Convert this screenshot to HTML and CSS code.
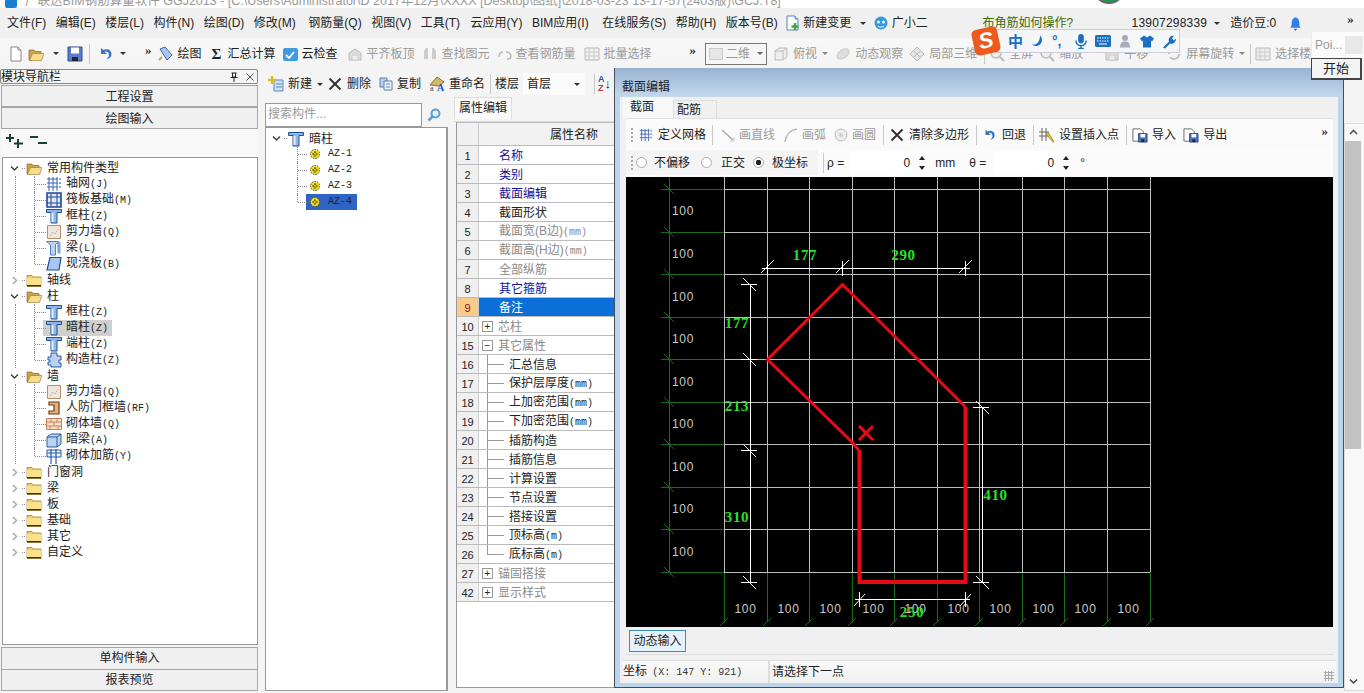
FILE: index.html
```html
<!DOCTYPE html>
<html lang="zh">
<head>
<meta charset="utf-8">
<title>截面编辑</title>
<link rel="stylesheet" href="styles.css">
</head>
<body>
<svg class="defs" aria-hidden="true">
  <symbol id="folder-open" viewBox="0 0 16 16"><path d="M1 4h5l1 1.500h6V8H5L3 14H1z" fill="#c9a24a" stroke="#8b6f2a" stroke-width=".7"/><path d="M4.500 7.500H16L13.500 14.500H1.500z" fill="#f6dc8c" stroke="#a5853a" stroke-width=".7"/></symbol>
  <symbol id="folder" viewBox="0 0 16 16"><path d="M1 3.500h5l1 1.500h8v9.500H1z" fill="#f4cf58" stroke="#9a7a22" stroke-width=".7"/><path d="M1 6h14v8.500H1z" fill="#fbe28a"/><path d="M1 13h14v1.500H1z" fill="#3a3010"/></symbol>
  <symbol id="pillar" viewBox="0 0 16 16"><path d="M.5 1.500h15v3h-4.500v10.500H5V4.500H.5z" fill="#8fb6ea" stroke="#24508f"/><path d="M6.500 5v9" stroke="#e4efff" stroke-width="2"/></symbol>
  <symbol id="grid" viewBox="0 0 16 16"><path d="M3 1v14M7 1v14M11 1v14M1 3h11M1 7h11M1 11h11" stroke="#3a66b8" fill="none"/><path d="M13 2h2v2h-2zM13 6h2v2h-2zM13 10h2v2h-2z" fill="#88a8d8"/></symbol>
  <symbol id="raft" viewBox="0 0 16 16"><path d="M1 1h14v14H1z" fill="#dbe6f7" stroke="#1f4a90" stroke-width="1.600"/><path d="M1 5h14M1 11h14M5 1v14M11 1v14" stroke="#1f4a90"/></symbol>
  <symbol id="wall" viewBox="0 0 16 16"><path d="M1.500 1.500h13v13h-13z" fill="#efe6dc" stroke="#b58a6a"/><path d="M4 12l3-4 2 2 3-5" stroke="#9aa8b8" stroke-dasharray="1 1" fill="none"/></symbol>
  <symbol id="beam" viewBox="0 0 16 16"><path d="M.5 1.500h12l-3 3v10.500h-5V5z" fill="#bcd4f2" stroke="#4d7fc0"/><path d="M11 1l3.500 1v12l-3-1z" fill="#7aa5dc"/></symbol>
  <symbol id="slab" viewBox="0 0 16 16"><path d="M4 1.500h11L13 14H1z" fill="#a9c6ee" stroke="#1f4f9c" stroke-width="1.200"/></symbol>
  <symbol id="gz" viewBox="0 0 16 16"><path d="M5 1h6v3h4v4h-2v3h2v4H5v-2H2v-3h2V8H2V5h3z" fill="#b9d2f2" stroke="#2a5aa5"/></symbol>
  <symbol id="door" viewBox="0 0 16 16"><path d="M3 2h10v12H3v-3h5V5H3z" fill="#e8b07a" stroke="#6b3d14" stroke-width="1.200"/></symbol>
  <symbol id="brick" viewBox="0 0 16 16"><path d="M.5 2.500h15v11H.5z" fill="#fbe0c8" stroke="#c4825a"/><path d="M.5 6h15M.5 10h15M5 2.500V6M11 2.500V6M8 6v4M4 10v3.500M12 10v3.500" stroke="#c4825a"/></symbol>
  <symbol id="aliang" viewBox="0 0 16 16"><path d="M1 5l4-3h10v10l-4 3H1z" fill="#b9d4f2" stroke="#2c5c96"/><path d="M1 5h10v10M11 5l4-3" stroke="#2c5c96" fill="none"/></symbol>
  <symbol id="jj" viewBox="0 0 16 16"><path d="M1 2h14v7H1z" fill="#e8f0fb" stroke="#2d5dac"/><path d="M5 1v15M10 1v15M1 5h14" stroke="#2d5dac" stroke-width="1.200"/></symbol>
  <symbol id="gear" viewBox="0 0 12 12"><circle cx="6" cy="6" r="4.500" fill="#f4e32a" stroke="#4a4a10" stroke-dasharray="1.500 1"/><path d="M3 6h6M6 3v6" stroke="#4a4a10"/><circle cx="6" cy="6" r="1.500" fill="#f4e32a" stroke="#4a4a10" stroke-width=".7"/></symbol>
  <symbol id="chev-d" viewBox="0 0 9 9"><path d="M1 2.500l3.500 3.500L8 2.500" fill="none" stroke="#444" stroke-width="1.500"/></symbol>
  <symbol id="chev-r" viewBox="0 0 9 9"><path d="M3 1l3.500 3.500L3 8" fill="none" stroke="#aaa" stroke-width="1.500"/></symbol>
  <symbol id="undo" viewBox="0 0 16 16"><path d="M4 2v6h6L7.500 5.800C9.500 5 12 6 12 9c0 1.500-1 3-3 4.500 3.500-.5 5.500-2.500 5.500-5.500C14.500 4 10 2 6.500 4z" fill="#3b72c4"/></symbol>
  <symbol id="x" viewBox="0 0 14 14"><path d="M1.500 1.500l11 11M12.500 1.500l-11 11" stroke="#333" stroke-width="2"/></symbol>
  <symbol id="disk" viewBox="0 0 16 16"><path d="M1 1h14v14H1z" fill="#5a7fc8" stroke="#2c4c8c"/><path d="M4 1.500h8v6H4z" fill="#fff"/><path d="M5 11h6v4H5z" fill="#223"/></symbol>
  <symbol id="doc" viewBox="0 0 16 16"><path d="M3 1h7l3 3v11H3z" fill="#fff" stroke="#888"/><path d="M10 1v3h3" fill="#ddd" stroke="#888"/></symbol>
  <symbol id="ghost" viewBox="0 0 16 16"><path d="M2 14V7l6-4 6 4v7z" fill="#ddd" stroke="#bbb"/><path d="M5 9h6v5H5z" fill="#eee" stroke="#ccc"/></symbol>
  <symbol id="sel" viewBox="0 0 16 16"><path d="M1 2h14v12H1z" fill="#eee" stroke="#bbb"/><path d="M1 6h14M1 10h14M5 2v12M10 2v12" stroke="#ccc"/></symbol>
  <symbol id="file-io" viewBox="0 0 17 17"><path d="M1 2h8l3 3v10H1z" fill="#fff" stroke="#666"/><path d="M7 7h9v9H7z" fill="#4d70bc" stroke="#2c4c8c"/><path d="M9 7.500h5v3.500H9z" fill="#fff"/><path d="M10 13h3v3h-3z" fill="#223"/></symbol>
</svg>

<header class="titlebar">
  <span class="app-icon"></span>
  <span class="title-text">广联达BIM钢筋算量软件 GGJ2013 - [C:\Users\Administrator\D 2017年12月\XXXX [Desktop\图纸]\2018-03-23 13-17-57(2403版)\GCJ.T8]</span>
</header>

<nav class="menubar">
  <span>文件(F)</span><span>编辑(E)</span><span>楼层(L)</span><span>构件(N)</span><span>绘图(D)</span><span>修改(M)</span><span class="m-g">钢筋量(Q)</span><span>视图(V)</span><span>工具(T)</span><span class="m-y">云应用(Y)</span><span>BIM应用(I)</span><span class="m-z">在线服务(S)</span><span>帮助(H)</span><span>版本号(B)</span>
  <span class="mi"><svg class="ic16" viewBox="0 0 16 16"><path d="M2 1h8l3 3v11H2z" fill="#fff" stroke="#4a86c8"/><path d="M10 1v3h3" fill="#cfe0f5" stroke="#4a86c8"/><path d="M10 8v7M6.500 11.500h7" stroke="#3fa83a" stroke-width="2.500"/></svg>新建变更<i class="caret caret-m"></i></span>
  <span class="mi mi2"><svg class="ic16" viewBox="0 0 16 16"><circle cx="8" cy="8" r="6.500" fill="#2e9be0"/><circle cx="5.500" cy="7" r="1.500" fill="#fff"/><circle cx="10.500" cy="7" r="1.500" fill="#fff"/><path d="M5 11c2 1.500 4 1.500 6 0" stroke="#fff" fill="none"/></svg>广小二</span>
  <span class="ad">布角筋如何操作?</span>
  <span class="phone">13907298339</span><i class="caret caret-p"></i>
  <span class="dou">造价豆:0</span>
  <svg class="bell" viewBox="0 0 12 14"><path d="M1 11c1.500-1 1.500-3 1.500-5S4 1.500 6 1.500 9.500 4 9.500 6s0 4 1.500 5z" fill="#2f7fe6"/><path d="M4.500 12h3L6 14z" fill="#1b5fb8"/></svg>
  <span class="more more-m">»</span>
</nav>

<div class="toolbar">
  <svg class="ic16 t1"><use href="#doc"/></svg>
  <svg class="ic16 t2"><use href="#folder-open"/></svg><i class="caret t3"></i>
  <svg class="ic16 t4"><use href="#disk"/></svg>
  <i class="sep t5"></i>
  <svg class="ic16 t6"><use href="#undo"/></svg><i class="caret t7"></i>
  <span class="more t8">»</span>
  <span class="ti t9"><svg class="ic16" viewBox="0 0 16 16"><path d="M2 3l5-2 7 8-5 5z" fill="#a8c8ee" stroke="#3a66a8"/><path d="M1 14l3-3" stroke="#c9a24a" stroke-width="2"/></svg>绘图</span>
  <span class="ti t10"><b class="sigma">Σ</b>汇总计算</span>
  <span class="ti t11"><svg class="ic16" viewBox="0 0 16 16"><rect x="1" y="2" width="15" height="13" rx="2" fill="#3f9ade"/><path d="M4 9l3 3 5-6" stroke="#fff" stroke-width="1.800" fill="none"/></svg>云检查</span>
  <span class="ti off t12"><svg class="ic16"><use href="#ghost"/></svg>平齐板顶</span>
  <span class="ti off t13"><svg class="ic16" viewBox="0 0 16 16"><path d="M2 13V5l2-3h2v11zM14 13V5l-2-3h-2v11z" fill="#ccc"/></svg>查找图元</span>
  <span class="ti off t14"><svg class="ic14" viewBox="0 0 14 14"><path d="M1 10c0-4 2-5 4-5M8 5c3 0 5 2 5 4s-2 3-4 3" fill="none" stroke="#bbb" stroke-width="1.500"/></svg>查看钢筋量</span>
  <span class="ti off t15"><svg class="ic16"><use href="#sel"/></svg>批量选择</span>
  <span class="more t16">»</span>
  <span class="combo2d"><i class="swatch"></i>二维<i class="caret"></i></span>
  <span class="ti off t17"><svg class="ic16" viewBox="0 0 16 16"><path d="M2 5l4-3h8v9l-4 3H2z" fill="#eee" stroke="#bbb"/><path d="M2 5h8v9M10 5l4-3" stroke="#bbb" fill="none"/></svg>俯视<i class="caret t-c"></i></span>
  <span class="ti off t18"><svg class="ic16" viewBox="0 0 16 16"><ellipse cx="8" cy="8" rx="7" ry="4" transform="rotate(-35 8 8)" fill="#ddd" stroke="#ccc"/></svg>动态观察</span>
  <span class="ti off t19"><svg class="ic16" viewBox="0 0 16 16"><path d="M8 1l7 7-7 7-7-7z" fill="#e4e4e4" stroke="#bbb"/><path d="M4.500 4.500l7 7M11.500 4.500l-7 7" stroke="#bbb"/></svg>局部三维</span>
  <i class="sep t20"></i>
  <span class="ti off t21"><svg class="ic16" viewBox="0 0 16 16"><circle cx="7" cy="7" r="5" fill="#eee" stroke="#bbb" stroke-width="1.500"/><path d="M11 11l4 4" stroke="#bbb" stroke-width="2"/></svg>全屏</span>
  <span class="ti off t22"><svg class="ic16" viewBox="0 0 16 16"><circle cx="7" cy="7" r="5" fill="#eee" stroke="#bbb" stroke-width="1.500"/><path d="M11 11l4 4" stroke="#bbb" stroke-width="2"/></svg>缩放</span>
  <span class="ti off t23"><svg class="ic16"><use href="#ghost"/></svg>平移</span>
  <span class="ti off t24"><svg class="ic16" viewBox="0 0 16 16"><path d="M3 8a5 5 0 0 1 9-3M13 8a5 5 0 0 1-9 3" fill="none" stroke="#bbb" stroke-width="1.800"/></svg>屏幕旋转<i class="caret t-c"></i></span>
  <i class="sep t25"></i>
  <span class="ti off t26"><svg class="ic16"><use href="#sel"/></svg>选择楼</span>
</div>

<main class="workspace">
  <aside class="nav">
    <div class="nav-head"><span>模块导航栏</span><span class="nav-ctl"><svg class="pin" viewBox="0 0 8 10"><path d="M1.500 1h5M2.500 1v4h3V1M.5 5.500h7M4 5.500V10" stroke="#222" fill="none"/></svg><svg class="close" viewBox="0 0 8 8"><path d="M.5.500l7 7M7.500.500l-7 7" stroke="#555"/></svg></span></div>
    <div class="nav-btn first">工程设置</div>
    <div class="nav-btn second">绘图输入</div>
    <div class="nav-tools">
      <svg class="exp" viewBox="0 0 18 16"><path d="M4 1v8M0 5h8M12 6v9M8 10.500h9" stroke="#16403a" stroke-width="2"/></svg>
      <svg class="exp" viewBox="0 0 18 16"><path d="M0 4h8M8 10h9" stroke="#16403a" stroke-width="2"/></svg>
    </div>
    <div class="tree">
      <div class="node"><svg class="chev"><use href="#chev-d"/></svg><i class="dot"></i><svg class="ic16"><use href="#folder-open"/></svg><span>常用构件类型</span></div>
      <div class="group">
        <div class="leaf"><i class="stem"></i><svg class="ic16"><use href="#grid"/></svg><span>轴网<u>(J)</u></span></div>
        <div class="leaf"><i class="stem"></i><svg class="ic16"><use href="#raft"/></svg><span>筏板基础<u>(M)</u></span></div>
        <div class="leaf"><i class="stem"></i><svg class="ic16"><use href="#pillar"/></svg><span>框柱<u>(Z)</u></span></div>
        <div class="leaf"><i class="stem"></i><svg class="ic16"><use href="#wall"/></svg><span>剪力墙<u>(Q)</u></span></div>
        <div class="leaf"><i class="stem"></i><svg class="ic16"><use href="#beam"/></svg><span>梁<u>(L)</u></span></div>
        <div class="leaf"><i class="stem end"></i><svg class="ic16"><use href="#slab"/></svg><span>现浇板<u>(B)</u></span></div>
      </div>
      <div class="node"><svg class="chev"><use href="#chev-r"/></svg><i class="dot"></i><svg class="ic16"><use href="#folder"/></svg><span>轴线</span></div>
      <div class="node"><svg class="chev"><use href="#chev-d"/></svg><i class="dot"></i><svg class="ic16"><use href="#folder-open"/></svg><span>柱</span></div>
      <div class="group">
        <div class="leaf"><i class="stem"></i><svg class="ic16"><use href="#pillar"/></svg><span>框柱<u>(Z)</u></span></div>
        <div class="leaf hot"><i class="stem"></i><svg class="ic16"><use href="#pillar"/></svg><span>暗柱<u>(Z)</u></span></div>
        <div class="leaf"><i class="stem"></i><svg class="ic16"><use href="#pillar"/></svg><span>端柱<u>(Z)</u></span></div>
        <div class="leaf"><i class="stem end"></i><svg class="ic16"><use href="#gz"/></svg><span>构造柱<u>(Z)</u></span></div>
      </div>
      <div class="node"><svg class="chev"><use href="#chev-d"/></svg><i class="dot"></i><svg class="ic16"><use href="#folder-open"/></svg><span>墙</span></div>
      <div class="group">
        <div class="leaf"><i class="stem"></i><svg class="ic16"><use href="#wall"/></svg><span>剪力墙<u>(Q)</u></span></div>
        <div class="leaf"><i class="stem"></i><svg class="ic16"><use href="#door"/></svg><span>人防门框墙<u>(RF)</u></span></div>
        <div class="leaf"><i class="stem"></i><svg class="ic16"><use href="#brick"/></svg><span>砌体墙<u>(Q)</u></span></div>
        <div class="leaf"><i class="stem"></i><svg class="ic16"><use href="#aliang"/></svg><span>暗梁<u>(A)</u></span></div>
        <div class="leaf"><i class="stem end"></i><svg class="ic16"><use href="#jj"/></svg><span>砌体加筋<u>(Y)</u></span></div>
      </div>
      <div class="node"><svg class="chev"><use href="#chev-r"/></svg><i class="dot"></i><svg class="ic16"><use href="#folder"/></svg><span>门窗洞</span></div>
      <div class="node"><svg class="chev"><use href="#chev-r"/></svg><i class="dot"></i><svg class="ic16"><use href="#folder"/></svg><span>梁</span></div>
      <div class="node"><svg class="chev"><use href="#chev-r"/></svg><i class="dot"></i><svg class="ic16"><use href="#folder"/></svg><span>板</span></div>
      <div class="node"><svg class="chev"><use href="#chev-r"/></svg><i class="dot"></i><svg class="ic16"><use href="#folder"/></svg><span>基础</span></div>
      <div class="node"><svg class="chev"><use href="#chev-r"/></svg><i class="dot"></i><svg class="ic16"><use href="#folder"/></svg><span>其它</span></div>
      <div class="node"><svg class="chev"><use href="#chev-r"/></svg><i class="dot"></i><svg class="ic16"><use href="#folder"/></svg><span>自定义</span></div>
    </div>
    <div class="nav-btn bottom">单构件输入</div>
    <div class="nav-btn">报表预览</div>
  </aside>

  <section class="center">
    <div class="subbar">
      <span class="ti s1"><svg class="ic16" viewBox="0 0 16 16"><path d="M6 4h9v11H6z" fill="#cfe0f5" stroke="#5a86c0"/><path d="M8 8h6M8 11h6" stroke="#5a86c0"/><path d="M4 0v8M0 4h8" stroke="#e0b828" stroke-width="2.500"/></svg>新建<i class="caret"></i></span>
      <span class="ti s2"><svg class="ic14"><use href="#x"/></svg>删除</span>
      <span class="ti s3"><svg class="ic14" viewBox="0 0 14 14"><path d="M1 1h7v9H1z" fill="#b8d0ee" stroke="#5a7fb0"/><path d="M5 4h8v9H5z" fill="#eef4fc" stroke="#5a7fb0"/><path d="M7 7h4M7 10h4" stroke="#5a7fb0"/></svg>复制</span>
      <span class="ti s4"><svg class="ic16" viewBox="0 0 16 16"><path d="M1 9l7-8 7 5-5 4z" fill="#d8b868" stroke="#8a7030"/><text x="1" y="15" class="svg-az">a</text><text x="8" y="15" class="svg-az2">A</text></svg>重命名</span>
      <i class="sep s5"></i>
      <span class="floor-l">楼层</span>
      <span class="floor-c">首层<i class="caret"></i></span>
      <i class="sep s6"></i>
      <span class="az"><b>A</b><b>Z</b></span><span class="az-arrow">↓</span>
    </div>
    <div class="panels">
      <div class="comp">
        <div class="search"><span class="search-box">搜索构件...</span><svg class="search-go" viewBox="0 0 14 14"><circle cx="8.500" cy="5.500" r="4" fill="#e4f1fb" stroke="#5aa0d8" stroke-width="2"/><path d="M5.500 8.500L1.500 12.500" stroke="#5aa0d8" stroke-width="2.500"/></svg></div>
        <div class="comp-tree">
          <div class="node"><svg class="chev"><use href="#chev-d"/></svg><i class="dot"></i><svg class="ic16"><use href="#pillar"/></svg><span>暗柱</span></div>
          <div class="az-leaf"><i class="stem"></i><svg class="ic12"><use href="#gear"/></svg><span class="mono">AZ-1</span></div>
          <div class="az-leaf"><i class="stem"></i><svg class="ic12"><use href="#gear"/></svg><span class="mono">AZ-2</span></div>
          <div class="az-leaf"><i class="stem"></i><svg class="ic12"><use href="#gear"/></svg><span class="mono">AZ-3</span></div>
          <div class="az-leaf"><i class="stem end"></i><span class="az-sel"><svg class="ic12"><use href="#gear"/></svg><span class="mono">AZ-4</span></span></div>
        </div>
      </div>
      <div class="props">
        <div class="props-tabs"><span class="props-tab">属性编辑</span></div>
        <div class="pgrid">
          <div class="pr head"><span class="pn"></span><span class="pv">属性名称</span></div>
          <div class="pr"><span class="pn">1</span><span class="pv lnk">名称</span></div>
          <div class="pr"><span class="pn">2</span><span class="pv lnk">类别</span></div>
          <div class="pr"><span class="pn">3</span><span class="pv lnk">截面编辑</span></div>
          <div class="pr"><span class="pn">4</span><span class="pv">截面形状</span></div>
          <div class="pr"><span class="pn">5</span><span class="pv gry">截面宽(B边)<u>(mm)</u></span></div>
          <div class="pr"><span class="pn">6</span><span class="pv gry">截面高(H边)<u>(mm)</u></span></div>
          <div class="pr"><span class="pn">7</span><span class="pv gry">全部纵筋</span></div>
          <div class="pr"><span class="pn">8</span><span class="pv lnk">其它箍筋</span></div>
          <div class="pr sel"><span class="pn">9</span><span class="pv">备注</span></div>
          <div class="pr"><span class="pn">10</span><i class="box">+</i><span class="pv gry tight">芯柱</span></div>
          <div class="pr"><span class="pn">15</span><i class="box">−</i><span class="pv gry tight">其它属性</span></div>
          <div class="pr"><span class="pn">16</span><i class="bl"></i><span class="pv sub">汇总信息</span></div>
          <div class="pr"><span class="pn">17</span><i class="bl"></i><span class="pv sub">保护层厚度<u>(mm)</u></span></div>
          <div class="pr"><span class="pn">18</span><i class="bl"></i><span class="pv sub">上加密范围<u>(mm)</u></span></div>
          <div class="pr"><span class="pn">19</span><i class="bl"></i><span class="pv sub">下加密范围<u>(mm)</u></span></div>
          <div class="pr"><span class="pn">20</span><i class="bl"></i><span class="pv sub">插筋构造</span></div>
          <div class="pr"><span class="pn">21</span><i class="bl"></i><span class="pv sub">插筋信息</span></div>
          <div class="pr"><span class="pn">22</span><i class="bl"></i><span class="pv sub">计算设置</span></div>
          <div class="pr"><span class="pn">23</span><i class="bl"></i><span class="pv sub">节点设置</span></div>
          <div class="pr"><span class="pn">24</span><i class="bl"></i><span class="pv sub">搭接设置</span></div>
          <div class="pr"><span class="pn">25</span><i class="bl"></i><span class="pv sub">顶标高<u>(m)</u></span></div>
          <div class="pr"><span class="pn">26</span><i class="bl last"></i><span class="pv sub">底标高<u>(m)</u></span></div>
          <div class="pr"><span class="pn">27</span><i class="box">+</i><span class="pv gry tight">锚固搭接</span></div>
          <div class="pr"><span class="pn">42</span><i class="box">+</i><span class="pv gry tight">显示样式</span></div>
        </div>
      </div>
    </div>
  </section>

  <div class="vscroll">
    <span class="vs-arrow"><svg class="ic9" viewBox="0 0 9 9"><path d="M1 6l3.500-3.500L8 6" fill="none" stroke="#555" stroke-width="1.600"/></svg></span>
    <span class="vs-thumb"></span>
    <span class="vs-arrow end"><svg class="ic9"><use href="#chev-d"/></svg></span>
  </div>
</main>

<section class="dialog">
  <div class="dlg-title">截面编辑</div>
  <div class="dlg-body">
    <div class="dlg-tabs"><span class="dtab on">截面</span><span class="dtab">配筋</span></div>
    <div class="dlg-tb">
      <i class="grip"></i>
      <span class="ti d1"><svg class="ic14"><use href="#grid"/></svg>定义网格</span><i class="sep d-s1"></i>
      <span class="ti off d2"><svg class="ic14" viewBox="0 0 14 14"><path d="M1 2l11 10" stroke="#aaa" stroke-width="1.500"/><path d="M13 9v4H9" fill="none" stroke="#ccc"/></svg>画直线</span>
      <span class="ti off d3"><svg class="ic14" viewBox="0 0 14 14"><path d="M1 14C2 7 6 2 13 1" fill="none" stroke="#bbb" stroke-width="1.500"/></svg>画弧</span>
      <span class="ti off d4"><svg class="ic14" viewBox="0 0 14 14"><circle cx="7" cy="7" r="6" fill="#eee" stroke="#bbb"/><circle cx="7" cy="7" r="2" fill="#ccc"/></svg>画圆</span><i class="sep d-s2"></i>
      <span class="ti d5"><svg class="ic14"><use href="#x"/></svg>清除多边形</span><i class="sep d-s3"></i>
      <span class="ti d6"><svg class="ic14"><use href="#undo"/></svg>回退</span><i class="sep d-s4"></i>
      <span class="ti d7"><svg class="ic16" viewBox="0 0 16 16"><path d="M3 1v13M7 1v13M0 5h10M0 9h10" stroke="#666"/><path d="M9 5l5 8 1 2-2-1-6-7z" fill="#e0b828" stroke="#8a7030" stroke-width=".6"/></svg>设置插入点</span><i class="sep d-s5"></i>
      <span class="ti d8"><svg class="ic16"><use href="#file-io"/></svg>导入</span>
      <span class="ti d9"><svg class="ic16"><use href="#file-io"/></svg>导出</span>
      <span class="more d-m">»</span>
    </div>
    <div class="dlg-coord">
      <div class="coord-left">
        <i class="grip"></i>
        <i class="radio r1"></i><span>不偏移</span>
        <i class="radio r2"></i><span>正交</span>
        <i class="radio r3 on"></i><span>极坐标</span>
      </div>
      <i class="sep c-s"></i>
      <span class="lbl">ρ =</span>
      <span class="num">0</span><span class="spin"><b></b><b></b></span>
      <span class="lbl c-mm">mm</span>
      <span class="lbl c-th">θ =</span>
      <span class="num num2">0</span><span class="spin"><b></b><b></b></span>
      <span class="lbl c-deg">°</span>
    </div>
    <svg class="canvas" viewBox="626 177 707 450" aria-label="截面图">
      <g class="gl-green">
        <path d="M669.500 177V572M661 189.500H724M661 232.500H724M661 274.500H724M661 317.500H724M661 359.500H724M661 402.500H724M661 444.500H724M661 487.500H724M661 529.500H724M661 572.500H724"/>
        <path d="M724.500 572V622M767.500 572V622M809.500 572V622M852.500 572V622M894.500 572V622M937.500 572V622M979.500 572V622M1022.500 572V622M1064.500 572V622M1107.500 572V622M1150.500 572V622"/>
        <path d="M664 184l10 10M664 227l10 10M664 269l10 10M664 312l10 10M664 354l10 10M664 397l10 10M664 439l10 10M664 482l10 10M664 524l10 10M664 567l10 10"/>
        <path d="M720 626l8-8M763 626l8-8M805 626l8-8M848 626l8-8M890 626l8-8M933 626l8-8M975 626l8-8M1018 626l8-8M1060 626l8-8M1103 626l8-8M1146 626l8-8"/>
      </g>
      <g class="gl-grid">
        <path d="M724.500 177V572M767.500 177V572M809.500 177V572M852.500 177V572M894.500 177V572M937.500 177V572M979.500 177V572M1022.500 177V572M1064.500 177V572M1107.500 177V572M1150.500 177V572"/>
        <path d="M724 189.500H1150M724 232.500H1150M724 274.500H1150M724 317.500H1150M724 359.500H1150M724 402.500H1150M724 444.500H1150M724 487.500H1150M724 529.500H1150M724 572.500H1150"/>
      </g>
      <g class="lbl100">
        <text x="683" y="215">100</text><text x="683" y="258">100</text><text x="683" y="301">100</text><text x="683" y="343">100</text><text x="683" y="386">100</text><text x="683" y="428">100</text><text x="683" y="471">100</text><text x="683" y="513">100</text><text x="683" y="556">100</text>
        <text x="745.500" y="613">100</text><text x="788.500" y="613">100</text><text x="830.500" y="613">100</text><text x="873.500" y="613">100</text><text x="915.500" y="613">100</text><text x="958.500" y="613">100</text><text x="1000.500" y="613">100</text><text x="1043.500" y="613">100</text><text x="1085.500" y="613">100</text><text x="1128.500" y="613">100</text>
      </g>
      <g class="dim">
        <path d="M762 268.500H970M767.500 261V276M842.500 261V276M965.500 261V276M761 273l13-13M836 273l13-13M959 273l13-13"/>
        <path d="M750.500 284V582M741 284.500H757M741 359.500H757M741 450.500H757M741 582.500H757M743 278l13 13M743 353l13 13M743 444l13 13M743 576l13 13"/>
        <path d="M982.500 407V582M973 407.500H989M973 582.500H989M976 401l13 13M976 576l13 13"/>
        <path d="M855 599.500H970M859.500 592V607M965.500 592V607M854 606l11-12M960 606l11-12"/>
      </g>
      <path class="poly" d="M965.500 407L842.500 284.500L767.500 359.500L853 443L858.500 450"/>
      <path class="poly thick" d="M859.500 450V582H965.500V407"/>
      <path class="cross" d="M859 426l14 14M873 426l-14 14"/>
      <g class="dimt">
        <text x="805" y="260">177</text><text x="903.500" y="260">290</text><text x="737" y="328">177</text><text x="737" y="411">213</text><text x="737" y="522">310</text><text x="995.500" y="500">410</text><text x="912" y="617">250</text>
      </g>
    </svg>
    <div class="dyn"><span class="dyn-btn">动态输入</span></div>
    <div class="status">
      <span class="st-l">坐标 <u class="st-m">(X: 147 Y: 921)</u></span>
      <span class="st-r">请选择下一点</span>
      <i class="resize"></i>
    </div>
  </div>
</section>

<div class="ime">
  <span class="ime-s">S</span>
  <span class="ime-zh">中</span>
  <svg class="ime-ic" viewBox="0 0 14 14"><path d="M9 1a6 6 0 1 1-8 9c5 1 8-3 8-9z" fill="#1b6fc2"/></svg>
  <span class="ime-p">°,</span>
  <svg class="ime-ic" viewBox="0 0 14 16"><rect x="4" y="0" width="6" height="10" rx="3" fill="#1b6fc2"/><path d="M1.500 7a5.500 5.500 0 0 0 11 0M7 13v3M4 15.500h6" stroke="#1b6fc2" fill="none" stroke-width="1.500"/></svg>
  <svg class="ime-kb" viewBox="0 0 16 12"><rect x="0" y="0" width="16" height="12" rx="1.500" fill="#1b6fc2"/><path d="M2 3h12M2 6h12" stroke="#fff" stroke-dasharray="1.500 1"/><path d="M4 9h8" stroke="#fff"/></svg>
  <svg class="ime-ic" viewBox="0 0 14 14"><circle cx="6" cy="3.500" r="3" fill="#aab"/><path d="M1 13c0-5 2-6 5-6s5 1 5 6z" fill="#aab"/></svg>
  <svg class="ime-ic" viewBox="0 0 14 14"><path d="M4 1L0 4l2 3 1-1v7h8V6l1 1 2-3-4-3-3 2z" fill="#1b6fc2"/></svg>
  <svg class="ime-ic" viewBox="0 0 14 14"><path d="M1 13l6-6c-1-3 1-6 5-6l-2 3 2 2 2-2c0 4-3 6-6 5l-5 5z" fill="#1b6fc2"/></svg>
</div>

<div class="poi"><div class="poi-top"><span>Poi...</span><i></i></div><div class="poi-btn">开始</div></div>
<div class="orb"></div>
</body>
</html>
```

FILE: styles.css
```css
* { box-sizing: border-box; }
html, body { margin: 0; padding: 0; }
body {
  width: 1364px; height: 693px; overflow: hidden; position: relative;
  background: #f4f4f4; color: #222;
  font: 12px/16px "Liberation Sans", "Noto Sans CJK SC", sans-serif;
}
i { font-style: normal; display: block; }
u { text-decoration: none; font: 10px/16px "Liberation Mono", monospace; }
.defs { position: absolute; width: 0; height: 0; }
.ic16 { width: 16px; height: 16px; flex: none; }
.ic14 { width: 14px; height: 14px; flex: none; }
.ic12 { width: 12px; height: 12px; flex: none; }
.ic9 { width: 9px; height: 9px; }

.titlebar { height: 8px; background: #fff; overflow: hidden; display: flex; padding-left: 5px; }
.app-icon { width: 12px; height: 14px; margin-top: -6px; background: #1a7fd0; border-radius: 2px; }
.title-text { margin: -7px 0 0 8px; color: #999; white-space: nowrap; font-size: 12.500px; }

.menubar { height: 30px; background: #f0f0f0; display: flex; align-items: center; gap: 9.500px; padding-left: 7px; white-space: nowrap; }
.m-g { margin-left: 3px; }
.m-y { margin-left: 1px; }
.m-z { margin-left: 4px; }
.mi { display: flex; align-items: center; gap: 2px; margin-left: -2px; }
.mi2 { margin-left: -3px; gap: 3px; }
.caret { width: 0; height: 0; border: 3px solid transparent; border-top: 3px solid #333; border-bottom: 0; flex: none; }
.caret-m { margin: 0 0 0 7px; }
.ad { margin-left: 45px; color: #3d6a05; }
.phone { margin-left: 49px; letter-spacing: .2px; }
.caret-p { margin-left: -3px; }
.dou { margin-left: 1px; }
.bell { width: 13px; height: 15px; margin-left: 3px; flex: none; }
.more { font: bold 13px/10px "Liberation Serif", serif; }
.more-m { margin-left: 36px; margin-top: -8px; }

.toolbar { height: 31px; display: flex; align-items: center; background: linear-gradient(#f7f7f7, #f4f4f4); white-space: nowrap; padding-left: 8px; }
.ti { display: flex; align-items: center; gap: 4px; flex: none; }
.off { color: #9a9a9a; }
.sep { width: 1px; height: 20px; background: #c8c8c8; flex: none; }
.sigma { font: bold 15px/16px "Liberation Serif", serif; width: 12px; }
.t2 { margin-left: 4px; } .t3 { margin-left: 9px; } .t4 { margin-left: 8px; }
.t5 { margin-left: 6px; } .t6 { margin-left: 7px; } .t7 { margin-left: 7px; }
.t8 { margin: -8px 0 0 19px; } .t9 { margin-left: 6px; } .t10 { margin-left: 10px; }
.t11 { margin-left: 6px; } .t12 { margin-left: 9px; } .t13 { margin-left: 7px; }
.t14 { margin-left: 8px; } .t15 { margin-left: 8px; } .t16 { margin: -8px 0 0 38px; }
.combo2d { display: flex; align-items: center; width: 62px; height: 22px; margin-left: 9px; border: 1px solid #777; color: #999; gap: 3px; padding-left: 3px; background: #f6f6f6; }
.swatch { width: 14px; height: 12px; background: #e6e6e6; border: 1px solid #ccc; }
.combo2d .caret { margin-left: 4px; border-top-color: #666; }
.t17 { margin-left: 6px; } .t-c { margin-left: 1px; border-top-color: #888; }
.t18 { margin-left: 7px; } .t19 { margin-left: 6px; } .t20 { margin-left: 7px; }
.t21 { margin-left: 4px; } .t22 { margin-left: 6px; } .t23 { margin-left: 21px; }
.t24 { margin-left: 18px; } .t25 { margin-left: 5px; } .t26 { margin-left: 4px; }

.workspace { display: flex; height: 624px; }
.nav { width: 258px; flex: none; display: flex; flex-direction: column; padding: 0 0 2px 1px; }
.nav-head { height: 15px; margin-left: -1px; border: 1px solid #888; border-radius: 2px; display: flex; justify-content: space-between; align-items: center; font-size: 12px; background: #f4f4f4; flex: none; }
.nav-ctl { display: flex; gap: 8px; align-items: center; padding-right: 3px; }
.pin { width: 8px; height: 10px; }
.close { width: 8px; height: 8px; }
.nav-btn { height: 22px; border: 1px solid #a6a6a6; text-align: center; line-height: 21px; background: #f0f0f0; font-size: 12px; flex: none; }
.nav-btn.first { margin-top: 1px; line-height: 23px; }
.nav-btn.second { line-height: 22px; }
.nav-btn.bottom { margin-top: 2px; border-bottom: 0; }
.nav-tools { height: 28px; display: flex; align-items: center; gap: 6px; padding: 0 0 5px 5px; background: #f8f8f8; flex: none; }
.exp { width: 18px; height: 16px; }
.tree { flex: 1; margin-left: 1px; background: #fff; border: 1px solid #999; padding: 2px 0 0 0; font-size: 12px; min-height: 0; }
.node { height: 16px; display: flex; align-items: center; padding-left: 7px; }
.chev { width: 9px; height: 9px; flex: none; }
.dot { width: 3px; border-top: 1px dotted #888; margin: 0 1px 0 3px; }
.node span { margin-left: 5px; }
.group { margin-left: 12px; border-left: 1px dotted #888; padding-left: 18px; }
.leaf { height: 16px; display: flex; align-items: center; position: relative; }
.stem { width: 12px; height: 16px; border-left: 1px dotted #888; align-self: flex-start; position: relative; flex: none; }
.stem::after { content: ""; display: block; width: 11px; height: 8px; border-bottom: 1px dotted #888; }
.stem.end { height: 8px; }
.leaf span { margin-left: 4px; }
.leaf.hot { background: linear-gradient(#d0d0d0, #d0d0d0) 9px 0 / 69px 16px no-repeat; }

.center { flex: 1; display: flex; flex-direction: column; min-width: 0; }
.subbar { height: 30px; display: flex; align-items: center; padding-left: 10px; background: #f4f4f4; white-space: nowrap; flex: none; }
.subbar .caret { margin-left: 1px; }
.s2 { margin-left: 5px; gap: 5px; } .s3 { margin-left: 8px; } .s4 { margin-left: 8px; }
.s5 { margin-left: 5px; } .floor-l { margin-left: 4px; }
.floor-c { display: flex; align-items: center; width: 62px; height: 22px; margin-left: 4px; padding-left: 4px; background: #fbfbfb; }
.floor-c .caret { margin-left: auto; margin-right: 5px; }
.s6 { margin-left: 9px; }
.az { display: flex; flex-direction: column; margin-left: 3px; font: bold 9px/9px "Liberation Sans", sans-serif; color: #3a55a8; }
.az b + b { color: #c23a3a; }
.az-arrow { font-size: 13px; font-weight: bold; }
.panels { display: flex; flex: 1; min-height: 0; }
.comp { width: 190px; flex: none; padding: 3px 0 2px 7px; display: flex; flex-direction: column; }
.search { display: flex; align-items: center; height: 25px; flex: none; }
.search-box { width: 157px; height: 24px; border: 1px solid #999; background: #fff; color: #999; line-height: 20px; padding-left: 2px; }
.search-go { width: 14px; height: 14px; margin-left: 5px; }
.comp-tree { flex: 1; border: 1px solid #999; border-right-width: 2px; background: #fff; padding-top: 3px; }
.comp-tree .node { padding-left: 6px; height: 15px; }
.az-leaf { height: 16px; display: flex; align-items: center; margin-left: 31px; }
.az-leaf .stem { width: 9px; }
.az-leaf .stem::after { width: 9px; }
.mono { font: 10px/16px "Liberation Mono", monospace; margin-left: 7px; }
.az-leaf > svg { margin-left: 3px; }
.az-sel { display: flex; align-items: center; height: 16px; background: #2f63c4; padding: 0 5px 0 3px; }

.props { flex: 1; min-width: 0; padding: 0 0 0 6px; margin-top: -2px; }
.props-tabs { height: 25px; border-bottom: 1px solid #ddd; }
.props-tab { display: inline-block; height: 22px; line-height: 21px; padding: 0 4px; background: #fbfbfb; border: 1px solid #ddd; border-bottom: 0; }
.pgrid { width: 600px; height: 566px; border-left: 1px solid #999; border-bottom: 1px solid #999; margin-left: 2px; background: #fff; font-size: 12px; }
.pr { display: flex; height: 19px; align-items: center; border-bottom: 1px solid #bbb; position: relative; }
.pr.head { height: 24px; background: #f2f2f2; border-top: 1px solid #bbb; }
.pn { width: 22px; height: 100%; background: #f0f0f0; border-right: 1px solid #ccc; text-align: center; flex: none; font: 11px/20px "Liberation Sans", sans-serif; color: #222; }
.pv { padding-left: 20px; margin-top: 2px; }
.head .pv { padding-left: 71px; }
.lnk { color: #12129a; }
.gry { color: #8a8a8a; }
.tight { padding-left: 5px; }
.sub { padding-left: 0; }
.sel { background: #0a70d8; color: #fff; }
.sel .pn { background: #f8cc88; color: #8a1010; }
.box { width: 11px; height: 11px; border: 1px solid #999; margin-left: 3px; font: 10px/9px "Liberation Sans", sans-serif; text-align: center; background: #fff; color: #222; flex: none; }
.bl { width: 22px; height: 100%; margin-left: 8px; flex: none; border-left: 1px solid #999; position: relative; }
.bl::after { content: ""; display: block; width: 16px; height: 9px; border-bottom: 1px solid #999; }
.bl.last { height: 10px; align-self: flex-start; }

.vscroll { width: 20px; flex: none; margin-top: 54px; margin-bottom: 2px; display: flex; flex-direction: column; background: #f8f8f8; border: 1px solid #ddd; border-right: 0; padding-right: 3px; }
.vs-arrow { height: 17px; display: flex; align-items: center; justify-content: center; flex: none; }
.vs-arrow.end { margin-top: auto; }
.vs-thumb { height: 308px; background: #c2c2c2; flex: none; }

.dialog { position: absolute; left: 614px; top: 68px; width: 730px; height: 620px; border: 1px solid #40505c; border-top: 0; background: #bcd4ec; padding: 0 5px 4px 5px; display: flex; flex-direction: column; }
.dlg-title { height: 29px; margin: 0 -5px; padding: 10px 0 0 7px; background: linear-gradient(#98b4d2, #c4d8ec); flex: none; font-size: 12px; line-height: 18px; color: #222; }
.dlg-body { flex: 1; background: #f0f0f0; display: flex; flex-direction: column; padding: 0 0 0 6px; min-height: 0; }
.dlg-tabs { height: 21px; display: flex; align-items: flex-end; flex: none; margin-left: -3px; }
.dtab { height: 18px; width: 44px; padding-left: 3px; border: 1px solid #ddd; border-bottom: 0; line-height: 18px; }
.dtab.on { height: 21px; width: 50px; padding-left: 7px; background: #f8f8f8; border: 0; line-height: 20px; }
.dlg-tb { height: 30px; flex: none; width: 707px; background: #fafafa; border-top: 1px solid #e0e0e0; display: flex; align-items: center; white-space: nowrap; padding: 2px 0 0 5px; }
.grip { width: 2px; height: 14px; flex: none; background: repeating-linear-gradient(#aaa 0 2px, transparent 2px 4px); }
.d1 { margin-left: 6px; gap: 5px; } .d-s1 { margin-left: 6px; } .d2 { margin-left: 8px; }
.d3 { margin-left: 9px; } .d4 { margin-left: 8px; } .d-s2 { margin-left: 7px; } .d5 { margin-left: 6px; gap: 5px; }
.d-s3 { margin-left: 7px; } .d6 { margin-left: 5px; gap: 6px; } .d-s4 { margin-left: 7px; } .d7 { margin-left: 5px; }
.d-s5 { margin-left: 7px; } .d8 { margin-left: 5px; gap: 4px; } .d9 { margin-left: 7px; } .d-m { margin: -8px 0 0 auto; padding-right: 5px; }
.dlg-coord { height: 29px; flex: none; width: 707px; background: #fbfbfb; display: flex; align-items: center; white-space: nowrap; }
.coord-left { height: 25px; display: flex; align-items: center; background: #f4f4f4; padding-left: 5px; width: 192px; flex: none; }
.radio { width: 11px; height: 11px; border: 1px solid #aaa; border-radius: 50%; background: #fff; flex: none; }
.radio.on { background: radial-gradient(circle, #222 0 2.500px, #fff 3px); }
.r1 { margin: 0 7px 0 3px; } .r2 { margin: 0 9px 0 11px; } .r3 { margin: 0 8px 0 8px; }
.c-s { margin-left: 5px; }
.lbl { margin-left: 3px; font-family: "Liberation Sans", sans-serif; }
.num { width: 60px; height: 24px; margin-left: 6px; background: #fff; text-align: right; line-height: 24px; }
.num2 { margin-left: 8px; }
.spin { display: flex; flex-direction: column; gap: 6px; margin-left: 9px; width: 6px; flex: none; }
.spin b { width: 0; height: 0; border: 3px solid transparent; border-top: 0; border-bottom: 4px solid #222; }
.spin b + b { border-bottom: 0; border-top: 4px solid #222; }
.c-mm { margin-left: 10px; } .c-th { margin-left: 14px; } .c-deg { margin-left: 11px; }
.canvas { display: block; width: 707px; height: 450px; background: #000; flex: none; }
.gl-green path { stroke: #176d17; fill: none; stroke-width: 1; }
.gl-grid path { stroke: #bdbdbd; fill: none; stroke-width: 1; }
.dim path { stroke: #fff; fill: none; stroke-width: 1; }
.lbl100 text { fill: #c9c9c9; font: 12px "Liberation Sans", sans-serif; letter-spacing: .6px; text-anchor: middle; }
.dimt text { fill: #28e028; font: bold 15px "Liberation Serif", serif; letter-spacing: .6px; text-anchor: middle; }
.poly { fill: none; stroke: #e80a14; stroke-width: 3; stroke-linejoin: miter; }
.poly.thick { stroke-width: 4; }
.cross { fill: none; stroke: #e80a14; stroke-width: 3; }
.svg-az { fill: #444; font: 8px "Liberation Serif", serif; }
.svg-az2 { fill: #1b50c0; font: bold 10px "Liberation Serif", serif; }
.dyn { height: 28px; flex: none; padding: 3px 0 0 3px; border-bottom: 1px solid #dcdcdc; width: 707px; }
.dyn-btn { display: block; width: 57px; height: 22px; border: 1px solid #3c8dc5; background: #e5f1fb; text-align: center; line-height: 20px; }
.status { margin: 5px 0 0 -3px; height: 23px; display: flex; align-items: center; background: linear-gradient(#fafafa, #f0f0f0); border-top: 1px solid #dcdcdc; position: relative; flex: none; width: 713px; }
.st-l { width: 147px; border-right: 2px solid #ddd; height: 100%; line-height: 21px; }
.st-m { margin-left: 2px; color: #333; }
.st-r { margin-left: 2px; }
.resize { position: absolute; right: 2px; bottom: 2px; width: 10px; height: 10px; background: radial-gradient(circle, #aaa 1px, transparent 1.200px) 0 0 / 3px 3px; }

.ime { position: absolute; left: 995px; top: 29px; width: 185px; height: 24px; background: #f4f6f8; border: 1px solid #ccd; display: flex; align-items: center; gap: 7.500px; padding-left: 12px; color: #1b6fc2; }
.ime-s { position: absolute; left: -23px; top: -2px; width: 26px; height: 26px; background: #ee5a1e; color: #fff; font: italic bold 22px/26px "Liberation Sans", sans-serif; text-align: center; border-radius: 5px; transform: rotate(-12deg); }
.ime-zh { font: bold 15px/20px "Noto Sans CJK SC", sans-serif; }
.ime-ic { width: 14px; height: 15px; flex: none; }
.ime-kb { width: 16px; height: 12px; flex: none; }
.ime-p { font: bold 14px/14px "Liberation Sans", sans-serif; width: 14px; }

.poi { position: absolute; left: 1311px; top: 32px; width: 53px; }
.poi-top { height: 26px; background: #fbfbfb; display: flex; align-items: center; justify-content: space-between; color: #999; padding-left: 3px; border-left: 1px solid #eee; }
.poi-top i { width: 18px; height: 18px; background: #e8e8e8; margin-right: 1px; }
.poi-btn { width: 51px; height: 22px; background: #f4f4f4; border: 1px solid #444; border-bottom-width: 2px; border-right-width: 2px; text-align: center; line-height: 20px; font-size: 13px; }
.orb { position: absolute; left: 1092px; top: -32px; width: 34px; height: 36px; border-radius: 50%; background: #1b9a50; border: 2px solid #666; }
```
